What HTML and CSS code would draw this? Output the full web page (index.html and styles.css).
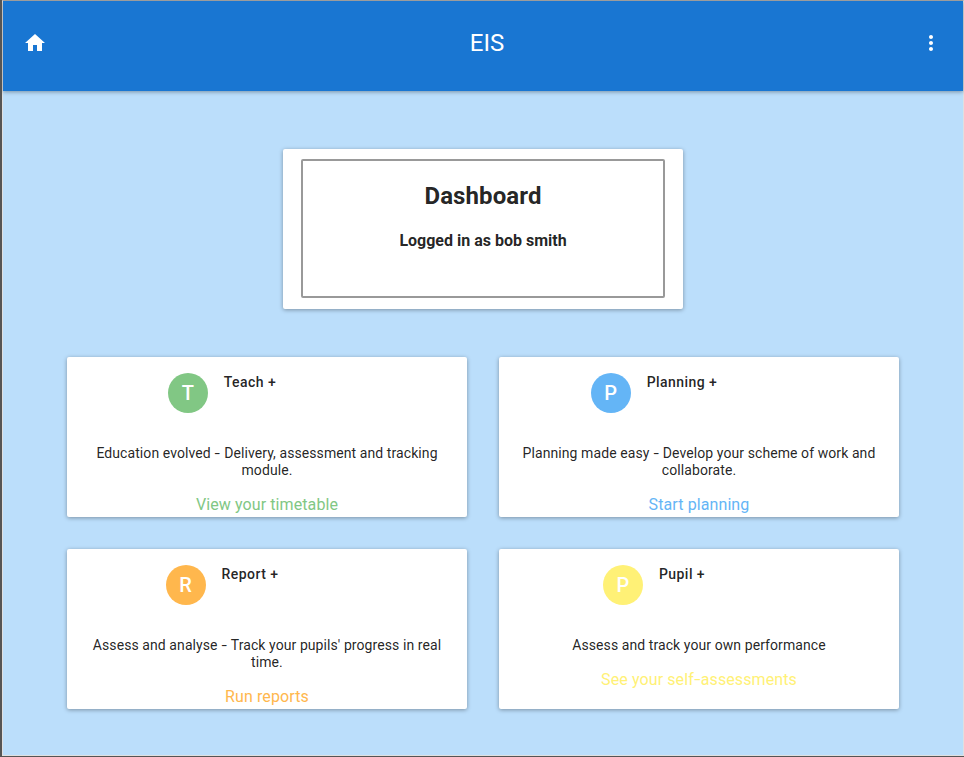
FILE: index.html
```html
<!DOCTYPE html>
<html lang="en">
<head>
<meta charset="utf-8">
<title>EIS</title>
<link rel="stylesheet" href="styles.css">
</head>
<body>
<div class="page">
<header class="toolbar">
  <svg class="icon" viewBox="0 0 24 24"><path d="M10 20v-6h4v6h5v-8h3L12 3 2 12h3v8z"/></svg>
  <span class="brand">EIS</span>
  <svg class="icon" viewBox="0 0 24 24"><path d="M12 8c1.100 0 2-.9 2-2s-.9-2-2-2-2 .9-2 2 .9 2 2 2zm0 2c-1.100 0-2 .9-2 2s.9 2 2 2 2-.9 2-2-.9-2-2-2zm0 6c-1.100 0-2 .9-2 2s.9 2 2 2 2-.9 2-2-.9-2-2-2z"/></svg>
</header>
<main>
  <section class="card hero">
    <div class="frame"><h2>Dashboard</h2><h4>Logged in as bob smith</h4></div>
  </section>
  <div class="grid">
    <section class="card module teach">
      <div class="head"><span class="avatar">T</span><span class="name">Teach +</span></div>
      <p>Education evolved <span class="dash">-</span> Delivery, assessment and tracking module.</p>
      <a>View your timetable</a>
    </section>
    <section class="card module planning">
      <div class="head"><span class="avatar">P</span><span class="name">Planning +</span></div>
      <p>Planning made easy <span class="dash">-</span> Develop your scheme of work and collaborate.</p>
      <a>Start planning</a>
    </section>
    <section class="card module report">
      <div class="head"><span class="avatar">R</span><span class="name">Report +</span></div>
      <p>Assess and analyse <span class="dash">-</span> Track your pupils' progress in real time.</p>
      <a>Run reports</a>
    </section>
    <section class="card module pupil">
      <div class="head"><span class="avatar">P</span><span class="name">Pupil +</span></div>
      <p>Assess and track your own performance</p>
      <a>See your self<span class="dash">-</span>assessments</a>
    </section>
  </div>
</main>
</div>
</body>
</html>
```
FILE: styles.css
```css
* { box-sizing: border-box; }
body {
  margin: 0;
  height: 757px;
  overflow: hidden;
  border: solid #555;
  border-width: 0 0 1px 2px;
  color: rgba(0, 0, 0, .87);
  font-family: Roboto, sans-serif;
  font-size: 16px;
}
.page {
  height: 756px;
  border: 1px solid #e0e0e0;
  border-top-color: #aaa;
  background: #bbdefb;
}
.toolbar {
  height: 90px;
  padding: 30px 20px 0;
  display: flex;
  justify-content: space-between;
  background: #1976d2;
  color: #fff;
  box-shadow: 0 1px 4px rgba(0, 0, 0, .35);
}
.icon { width: 24px; height: 24px; fill: currentColor; }
.brand { font-size: 24px; line-height: 24px; padding-left: 8px; }
main { padding-top: 58px; }
.card {
  width: 400px;
  height: 160px;
  background: #fff;
  border-radius: 2px;
  box-shadow: 0 1px 4px rgba(0, 0, 0, .35);
  text-align: center;
}
.hero { margin: 0 0 0 280px; padding: 10px 18px; }
.frame {
  height: 139px;
  border: 2px solid #999;
  border-radius: 2px;
  padding-top: 21px;
}
h2, h4 { margin: 0; font-weight: 700; }
h2 { font-size: 24px; line-height: 28px; letter-spacing: .1px; }
h4 { font-size: 16px; line-height: 19px; margin-top: 21px; }
.grid {
  display: grid;
  grid-template-columns: 400px 400px;
  gap: 32px;
  margin: 48px 0 0 64px;
}
.module { padding: 16px 16px 0; }
.head {
  display: flex;
  justify-content: center;
  gap: 16px;
  height: 72px;
  padding-right: 90px;
}
.avatar {
  width: 40px;
  height: 40px;
  border-radius: 50%;
  background: var(--tone);
  color: #fff;
  font-size: 20px;
  font-weight: 500;
  line-height: 40px;
}
.name {
  font-size: 14px;
  font-weight: 500;
  line-height: 19px;
  letter-spacing: .45px;
}
p { margin: 0 0 16px; font-size: 14px; line-height: 17px; letter-spacing: .08px; }
a { display: block; color: var(--tone); line-height: 19px; letter-spacing: .1px; }
.dash { display: inline-block; padding: 0 1.2px; transform: scaleX(1.4); }
.teach { --tone: #81c784; }
.planning { --tone: #64b5f6; }
.report { --tone: #ffb74d; }
.pupil { --tone: #fff176; }
```
